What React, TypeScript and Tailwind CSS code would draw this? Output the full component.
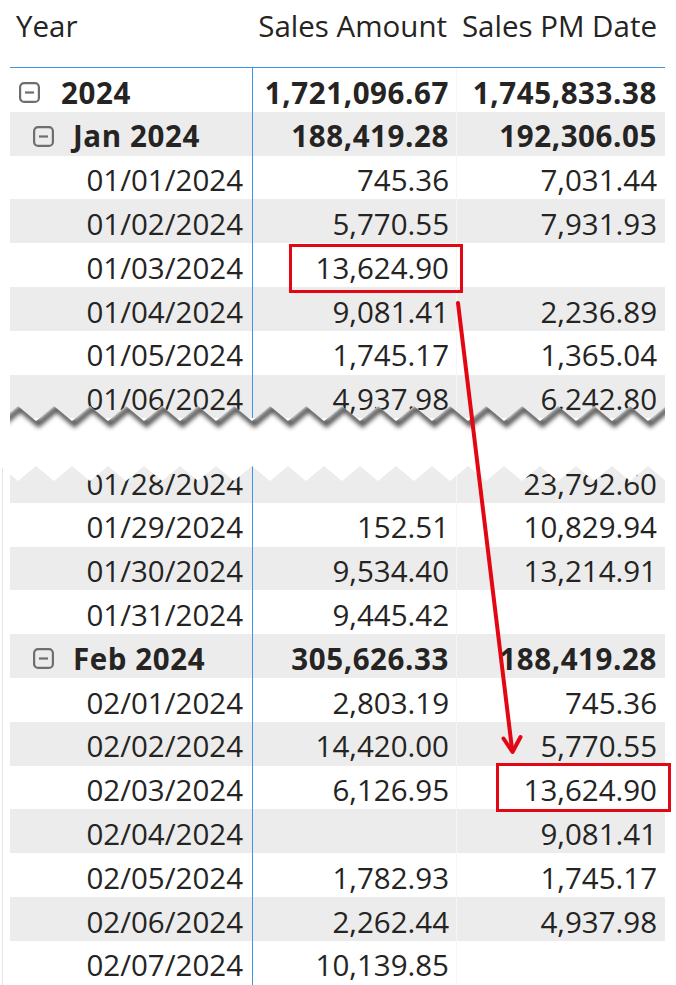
type RowData = { label: string; amt: string; pm: string; level?: 0 | 1 };

const upperRows: RowData[] = [
  { label: '2024', amt: '1,721,096.67', pm: '1,745,833.38', level: 0 },
  { label: 'Jan 2024', amt: '188,419.28', pm: '192,306.05', level: 1 },
  { label: '01/01/2024', amt: '745.36', pm: '7,031.44' },
  { label: '01/02/2024', amt: '5,770.55', pm: '7,931.93' },
  { label: '01/03/2024', amt: '13,624.90', pm: '' },
  { label: '01/04/2024', amt: '9,081.41', pm: '2,236.89' },
  { label: '01/05/2024', amt: '1,745.17', pm: '1,365.04' },
  { label: '01/06/2024', amt: '4,937.98', pm: '6,242.80' },
];

const lowerRows: RowData[] = [
  { label: '01/28/2024', amt: '', pm: '23,792.60' },
  { label: '01/29/2024', amt: '152.51', pm: '10,829.94' },
  { label: '01/30/2024', amt: '9,534.40', pm: '13,214.91' },
  { label: '01/31/2024', amt: '9,445.42', pm: '' },
  { label: 'Feb 2024', amt: '305,626.33', pm: '188,419.28', level: 1 },
  { label: '02/01/2024', amt: '2,803.19', pm: '745.36' },
  { label: '02/02/2024', amt: '14,420.00', pm: '5,770.55' },
  { label: '02/03/2024', amt: '6,126.95', pm: '13,624.90' },
  { label: '02/04/2024', amt: '', pm: '9,081.41' },
  { label: '02/05/2024', amt: '1,782.93', pm: '1,745.17' },
  { label: '02/06/2024', amt: '2,262.44', pm: '4,937.98' },
  { label: '02/07/2024', amt: '10,139.85', pm: '' },
];

function MinusBox() {
  return (
    <svg width="21" height="21" viewBox="0 0 21 21" className="shrink-0">
      <rect x="1.1" y="1.1" width="18.8" height="18.8" rx="4" fill="none" stroke="#6e6e6e" strokeWidth="2.2" />
      <line x1="6" y1="10.5" x2="15" y2="10.5" stroke="#6e6e6e" strokeWidth="2.2" />
    </svg>
  );
}

function Row({ r, grey }: { r: RowData; grey: boolean }) {
  const bold = r.level !== undefined;
  return (
    <div
      className={`flex h-[43.8px] ${grey ? 'bg-[#ececec]' : 'bg-white'} ${
        bold ? 'font-bold tracking-[0.6px]' : ''
      }`}
    >
      {/* Year */}
      <div
        className={`flex w-[243px] shrink-0 items-center border-r border-[#3b95ee] pt-[5px] ${
          r.level === 0
            ? 'gap-[21px] pl-[9px]'
            : r.level === 1
              ? 'gap-[19px] pl-[23px]'
              : 'justify-end pr-[9px]'
        }`}
      >
        {bold && <MinusBox />}
        <span>{r.label}</span>
      </div>
      {/* Sales Amount */}
      <div className="flex w-[204px] shrink-0 items-center justify-end border-r border-[#f6f6f6] pr-[7px] pt-[5px]">
        {r.amt}
      </div>
      {/* Sales PM Date */}
      <div className="flex flex-1 items-center justify-end pr-[8px] pt-[5px]">{r.pm}</div>
    </div>
  );
}

// torn-paper edge between the two table fragments
const upperEdge: number[][] = [];
const lowerEdge: number[][] = [];
for (let k = -2; k <= 40; k++) {
  const x = k * 18;
  const peak = Math.abs(k) % 2 === 1;
  upperEdge.push([x, peak ? 406 : 421]);
  lowerEdge.push([x, peak ? 481 : 466]);
}
const gapPoints = [...upperEdge, ...lowerEdge.slice().reverse()].map(([x, y]) => `${x},${y}`).join(' ');
const shadowPoints = upperEdge.map(([x, y]) => `${x + 2.5},${y + 3}`).join(' ');

export default function App() {
  return (
    <div className="relative h-[985px] w-[676px] overflow-hidden bg-white font-['Open_Sans',sans-serif] text-[29.5px] leading-none text-[#252423]">
      {/* upper fragment */}
      <div className="pl-[10px] pr-[11px]">
        <div className="flex h-[68px] border-b border-[#3b95ee]">
          <div className="flex h-[52px] w-[243px] shrink-0 items-center pl-[6px]">Year</div>
          <div className="flex h-[52px] w-[204px] shrink-0 items-center justify-end pr-[10px]">Sales Amount</div>
          <div className="flex h-[52px] flex-1 items-center justify-end pr-[8px]">Sales PM Date</div>
        </div>
        {upperRows.map((r, i) => (
          <Row key={r.label} r={r} grey={i % 2 === 1} />
        ))}
      </div>

      <div className="h-[40.6px]" />

      {/* lower fragment */}
      <div className="ml-[2px] border-l border-[#e4e4e4] pl-[7px] pr-[11px]">
        {lowerRows.map((r, i) => (
          <Row key={r.label} r={r} grey={i % 2 === 0} />
        ))}
      </div>

      {/* tear + arrow annotation */}
      <svg className="pointer-events-none absolute left-0 top-0" width="676" height="985" viewBox="0 0 676 985">
        <defs>
          <clipPath id="gapClip">
            <polygon points={gapPoints} />
          </clipPath>
          <clipPath id="rowsClip">
            <rect x="10" y="380" width="655" height="60" />
          </clipPath>
          <filter id="soft" x="-5%" y="-50%" width="110%" height="200%">
            <feGaussianBlur stdDeviation="2" />
          </filter>
        </defs>
        <polygon points={gapPoints} fill="#ffffff" />
        <g clipPath="url(#gapClip)">
          <g clipPath="url(#rowsClip)">
            <polyline
              points={shadowPoints}
              fill="none"
              stroke="#333333"
              strokeWidth="6"
              opacity="0.8"
              filter="url(#soft)"
            />
          </g>
        </g>
        <line x1="458" y1="303" x2="512" y2="749" stroke="#e30613" strokeWidth="4" strokeLinecap="round" />
        <polyline
          points="503.5,738.5 512.5,752 520.5,737"
          fill="none"
          stroke="#e30613"
          strokeWidth="4"
          strokeLinecap="round"
          strokeLinejoin="round"
        />
      </svg>

      {/* highlight boxes */}
      <div className="absolute left-[289px] top-[244px] h-[49px] w-[174px] border-[3px] border-[#e30613]" />
      <div className="absolute left-[496px] top-[763px] h-[49px] w-[175px] border-[3px] border-[#e30613]" />
    </div>
  );
}
